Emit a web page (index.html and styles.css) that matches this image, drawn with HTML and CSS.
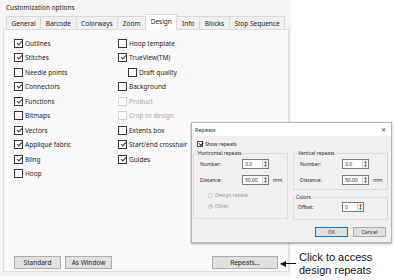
FILE: index.html
```html
<!DOCTYPE html>
<html>
<head>
  <title>Customization options</title>
  <link rel="stylesheet" href="styles.css">
</head>
<body>
  <div class="window">
    <div class="window-title">Customization options</div>
    <div class="tabs">
      <div class="tab">General</div>
      <div class="tab">Barcode</div>
      <div class="tab">Colorways</div>
      <div class="tab">Zoom</div>
      <div class="tab active">Design</div>
      <div class="tab">Info</div>
      <div class="tab">Blocks</div>
      <div class="tab">Stop Sequence</div>
    </div>

    <div class="page">
      <div class="options">
        <div class="column">
          <div class="check"><span class="box checked"></span>Outlines</div>
          <div class="check"><span class="box checked"></span>Stitches</div>
          <div class="check"><span class="box"></span>Needle points</div>
          <div class="check"><span class="box checked"></span>Connectors</div>
          <div class="check"><span class="box checked"></span>Functions</div>
          <div class="check"><span class="box"></span>Bitmaps</div>
          <div class="check"><span class="box checked"></span>Vectors</div>
          <div class="check"><span class="box checked"></span>Appliqué fabric</div>
          <div class="check"><span class="box checked"></span>Bling</div>
          <div class="check"><span class="box"></span>Hoop</div>
        </div>
        <div class="column">
          <div class="check"><span class="box"></span>Hoop template</div>
          <div class="check"><span class="box checked"></span>TrueView(TM)</div>
          <div class="check sub"><span class="box"></span>Draft quality</div>
          <div class="check"><span class="box"></span>Background</div>
          <div class="check disabled"><span class="box"></span>Product</div>
          <div class="check disabled"><span class="box"></span>Crop to design</div>
          <div class="check"><span class="box"></span>Extents box</div>
          <div class="check"><span class="box checked"></span>Start/end crosshair</div>
          <div class="check"><span class="box checked"></span>Guides</div>
        </div>
      </div>

      <div class="page-buttons">
        <button class="btn">Standard</button>
        <button class="btn">As Window</button>
        <button class="btn wide">Repeats...</button>
      </div>
    </div>
  </div>

  <div class="callout">
    <div class="arrow"></div>
    <div class="callout-text">Click to access<br>design repeats</div>
  </div>

  <div class="dialog">
    <div class="dialog-title">
      <span>Repeats</span>
      <span class="close">✕</span>
    </div>
    <div class="dialog-body">
      <div class="show-row"><span class="mini-box checked"></span>Show repeats</div>

      <div class="groups">
        <fieldset class="group horizontal">
          <legend>Horizontal repeats</legend>
          <div class="field">
            <span class="field-label">Number:</span>
            <span class="spin"><span class="value">3.0</span><svg class="arrows" viewBox="0 0 5 10"><polygon points="2.5,1 4.2,3.6 0.8,3.6" fill="#e0302a"/><rect x="2" y="3.6" width="1" height="1.4" fill="#e0302a"/><rect x="2" y="5" width="1" height="1.4" fill="#2a9c3a"/><polygon points="0.8,6.4 4.2,6.4 2.5,9" fill="#2a9c3a"/></svg></span>
          </div>
          <div class="field">
            <span class="field-label">Distance:</span>
            <span class="spin"><span class="value">50.00</span><svg class="arrows" viewBox="0 0 5 10"><polygon points="2.5,1 4.2,3.6 0.8,3.6" fill="#e0302a"/><rect x="2" y="3.6" width="1" height="1.4" fill="#e0302a"/><rect x="2" y="5" width="1" height="1.4" fill="#2a9c3a"/><polygon points="0.8,6.4 4.2,6.4 2.5,9" fill="#2a9c3a"/></svg></span>
            <span class="unit">mm</span>
          </div>
          <div class="radio first"><span class="dot"></span>Design repeat</div>
          <div class="radio"><span class="dot on"></span>Other</div>
        </fieldset>

        <div class="right-groups">
          <fieldset class="group">
            <legend>Vertical repeats</legend>
            <div class="field">
              <span class="field-label">Number:</span>
              <span class="spin"><span class="value">3.0</span><svg class="arrows" viewBox="0 0 5 10"><polygon points="2.5,1 4.2,3.6 0.8,3.6" fill="#e0302a"/><rect x="2" y="3.6" width="1" height="1.4" fill="#e0302a"/><rect x="2" y="5" width="1" height="1.4" fill="#2a9c3a"/><polygon points="0.8,6.4 4.2,6.4 2.5,9" fill="#2a9c3a"/></svg></span>
            </div>
            <div class="field">
              <span class="field-label">Distance:</span>
              <span class="spin"><span class="value">50.00</span><svg class="arrows" viewBox="0 0 5 10"><polygon points="2.5,1 4.2,3.6 0.8,3.6" fill="#e0302a"/><rect x="2" y="3.6" width="1" height="1.4" fill="#e0302a"/><rect x="2" y="5" width="1" height="1.4" fill="#2a9c3a"/><polygon points="0.8,6.4 4.2,6.4 2.5,9" fill="#2a9c3a"/></svg></span>
              <span class="unit">mm</span>
            </div>
          </fieldset>
          <fieldset class="group colors">
            <legend>Colors</legend>
            <div class="field">
              <span class="field-label">Offset:</span>
              <span class="spin short"><span class="value">0</span><svg class="arrows" viewBox="0 0 5 10"><polygon points="2.5,1 4.2,3.6 0.8,3.6" fill="#e0302a"/><rect x="2" y="3.6" width="1" height="1.4" fill="#e0302a"/><rect x="2" y="5" width="1" height="1.4" fill="#2a9c3a"/><polygon points="0.8,6.4 4.2,6.4 2.5,9" fill="#2a9c3a"/></svg></span>
            </div>
          </fieldset>
        </div>
      </div>

      <div class="dialog-buttons">
        <button class="dbtn default">OK</button>
        <button class="dbtn">Cancel</button>
      </div>
    </div>
  </div>
</body>
</html>
```

FILE: styles.css
```css
body {
  margin: 0;
  width: 394px;
  height: 280px;
  overflow: hidden;
  position: relative;
  background-color: #ffffff;
  font-family: "Noto Sans", "Liberation Sans", sans-serif;
  color: #1e1e1e;
}

/* main options window */
.window {
  width: 291px;
  height: 276px;
  box-sizing: border-box;
  padding: 0 2px 4px 3px;
  background-color: #f3f3f3;
  display: flex;
  flex-direction: column;
}
.window-title {
  height: 15px;
  line-height: 15px;
  padding-left: 3px;
  font-size: 6.5px;
}
.tabs {
  display: flex;
  align-items: flex-end;
  height: 14px;
  padding-left: 3px;
  position: relative;
  z-index: 1;
}
.tab {
  height: 13px;
  line-height: 13px;
  box-sizing: border-box;
  padding: 0 4.6px;
  margin-right: -1px;
  font-size: 6.5px;
  border: 1px solid #d9d9d9;
  border-bottom: none;
  background-color: #f0f0f0;
}
.tab.active {
  height: 16px;
  margin-bottom: -1px;
  background-color: #ffffff;
  position: relative;
}
.page {
  flex: 1;
  border: 1px solid #dcdcdc;
  background-color: #f9f9f9;
  padding: 6px 0 2px 10px;
  display: flex;
  flex-direction: column;
}
.options {
  display: flex;
}
.column {
  width: 104px;
}
.check {
  display: flex;
  align-items: center;
  height: 14.5px;
  font-size: 6.5px;
  gap: 2px;
}
.check.sub {
  margin-left: 10px;
}
.box {
  width: 9px;
  height: 9px;
  box-sizing: border-box;
  border: 1px solid #333333;
  background-color: #ffffff;
  position: relative;
}
.box.checked::after {
  content: "";
  position: absolute;
  left: 1.5px;
  top: 0.8px;
  width: 4.5px;
  height: 2.3px;
  border-left: 1px solid #3a3a3a;
  border-bottom: 1px solid #3a3a3a;
  transform: rotate(-45deg);
}
.check.disabled {
  color: #a8a8a8;
}
.check.disabled .box {
  border-color: #cfcfcf;
}
.page-buttons {
  margin-top: auto;
  display: flex;
  gap: 4px;
}
.btn {
  width: 47px;
  height: 13px;
  padding: 0;
  font-family: inherit;
  font-size: 6.5px;
  color: #1e1e1e;
  border: 1px solid #adadad;
  background-color: #e1e1e1;
}
.btn.wide {
  width: 66px;
  margin-left: 96px;
}

/* annotation */
.callout {
  position: absolute;
  left: 281px;
  top: 251px;
  display: flex;
  align-items: center;
  gap: 3px;
}
.arrow {
  width: 15px;
  height: 1px;
  background-color: #111;
  position: relative;
  align-self: flex-start;
  margin-top: 12px;
}
.arrow::before {
  content: "";
  position: absolute;
  left: -1px;
  top: -2.5px;
  border-right: 6px solid #111;
  border-top: 3px solid transparent;
  border-bottom: 3px solid transparent;
}
.callout-text {
  font-family: "Liberation Sans", Arial, sans-serif;
  font-size: 11px;
  line-height: 12.5px;
  color: #111;
}

/* Repeats dialog */
.dialog {
  position: absolute;
  left: 191px;
  top: 122px;
  width: 201px;
  height: 121px;
  box-sizing: border-box;
  border: 1px solid #b4b4b4;
  box-shadow: 0 1px 2px rgba(0, 0, 0, 0.35);
  background-color: #f0f0f0;
  font-size: 5px;
  color: #2a2a2a;
}
.dialog-title {
  height: 13px;
  background-color: #ffffff;
  display: flex;
  align-items: center;
  justify-content: space-between;
  padding: 0 5px 0 3px;
  font-size: 5.5px;
}
.close {
  font-size: 6px;
  color: #444;
}
.dialog-body {
  padding: 4px 3px 0 1px;
}
.show-row {
  height: 8px;
  display: flex;
  align-items: center;
  gap: 2px;
  padding-left: 4px;
}
.mini-box {
  width: 6px;
  height: 6px;
  box-sizing: border-box;
  border: 1px solid #444;
  background-color: #fff;
  position: relative;
}
.mini-box.checked::after {
  content: "";
  position: absolute;
  left: 0.6px;
  top: 0.3px;
  width: 3px;
  height: 1.5px;
  border-left: 0.8px solid #222;
  border-bottom: 0.8px solid #222;
  transform: rotate(-45deg);
}
.groups {
  display: flex;
  gap: 5px;
  margin-top: 2px;
}
.group {
  margin: 0;
  padding: 0 0 0 6px;
  border: 1px solid #dcdcdc;
  min-width: 0;
  box-sizing: border-box;
  width: 95px;
}
.group.horizontal {
  height: 69px;
}
.group legend {
  padding: 0 1px;
  margin-left: -3px;
  font-size: 5px;
  line-height: 6px;
}
.right-groups {
  display: flex;
  flex-direction: column;
  gap: 4px;
}
.right-groups .group {
  height: 40px;
}
.right-groups .group.colors {
  height: 26px;
  padding-left: 4px;
}
.field {
  display: flex;
  align-items: center;
  height: 10px;
  margin-top: 3px;
}
.field + .field {
  margin-top: 6px;
}
.field-label {
  width: 42px;
}
.colors .field {
  margin-top: 2px;
}
.colors .field-label {
  width: 44px;
}
.spin {
  display: flex;
  height: 10px;
  width: 27px;
  box-sizing: border-box;
  border: 1px solid #7a7a7a;
  background-color: #fff;
}
.spin.short {
  width: 22px;
}
.value {
  flex: 1;
  padding-left: 2px;
  line-height: 8px;
}
.arrows {
  width: 5px;
  height: 8px;
  border-left: 1px solid #d0d0d0;
  background-color: #f4f4f4;
}
.unit {
  margin-left: 4px;
}
.radio {
  display: flex;
  align-items: center;
  gap: 2px;
  height: 8px;
  margin: 3px 0 0 8px;
  color: #9a9a9a;
}
.radio.first {
  margin-top: 6px;
}
.dot {
  width: 5px;
  height: 5px;
  box-sizing: border-box;
  border: 1px solid #c4c4c4;
  border-radius: 50%;
  background-color: #fafafa;
  position: relative;
}
.dot.on::after {
  content: "";
  position: absolute;
  left: 0.5px;
  top: 0.5px;
  width: 2px;
  height: 2px;
  border-radius: 50%;
  background-color: #b0b0b0;
}
.dialog-buttons {
  display: flex;
  justify-content: flex-end;
  gap: 5px;
  margin-top: 7px;
  padding-right: 2px;
}
.dbtn {
  width: 33px;
  height: 10px;
  padding: 0;
  font-family: inherit;
  font-size: 5px;
  color: #2a2a2a;
  border: 1px solid #adadad;
  background-color: #e1e1e1;
}
.dbtn.default {
  border-color: #0078d7;
}
```
